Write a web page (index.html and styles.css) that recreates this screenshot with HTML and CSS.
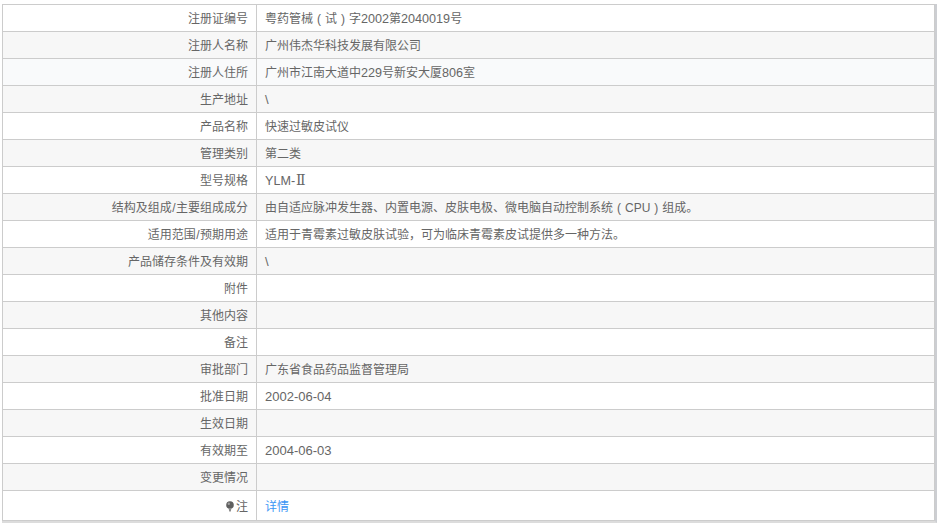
FILE: index.html
```html
<!DOCTYPE html>
<html lang="zh-CN">
<head>
<meta charset="utf-8">
<title>注册证信息</title>
<link rel="stylesheet" href="styles.css">
</head>
<body>
<div class="frame">
<table class="info">
<colgroup><col class="c-label"><col></colgroup>
<tbody>
<tr><th>注册证编号</th><td>粤药管械<span class="paren">(</span>试<span class="paren">)</span>字<span class="lat">2002</span>第<span class="lat">2040019</span>号</td></tr>
<tr><th>注册人名称</th><td>广州伟杰华科技发展有限公司</td></tr>
<tr class="tint"><th>注册人住所</th><td>广州市江南大道中<span class="lat">229</span>号新安大厦<span class="lat">806</span>室</td></tr>
<tr><th>生产地址</th><td><span class="date">\</span></td></tr>
<tr><th>产品名称</th><td>快速过敏皮试仪</td></tr>
<tr><th>管理类别</th><td>第二类</td></tr>
<tr><th>型号规格</th><td><span class="lat">YLM-</span><span class="roman">Ⅱ</span></td></tr>
<tr><th>结构及组成<span class="slash">/</span>主要组成成分</th><td>由自适应脉冲发生器、内置电源、皮肤电极、微电脑自动控制系统<span class="paren">(</span>CPU<span class="paren">)</span>组成。</td></tr>
<tr><th>适用范围<span class="slash">/</span>预期用途</th><td>适用于青霉素过敏皮肤试验，可为临床青霉素皮试提供多一种方法。</td></tr>
<tr><th>产品储存条件及有效期</th><td><span class="date">\</span></td></tr>
<tr><th>附件</th><td></td></tr>
<tr><th>其他内容</th><td></td></tr>
<tr><th>备注</th><td></td></tr>
<tr><th>审批部门</th><td>广东省食品药品监督管理局</td></tr>
<tr><th>批准日期</th><td><span class="date">2002-06-04</span></td></tr>
<tr><th>生效日期</th><td></td></tr>
<tr><th>有效期至</th><td><span class="date">2004-06-03</span></td></tr>
<tr><th>变更情况</th><td></td></tr>
<tr class="last"><th><svg class="bulb" width="8" height="11" viewBox="0 0 8 11" aria-hidden="true"><circle cx="4" cy="4" r="3.8" fill="#5f5f5f"/><circle cx="2.8" cy="2.8" r="1.2" fill="#a0a0a0"/><path d="M2.6 7h2.8l-.6 3.6H3.2z" fill="#8a8a8a"/></svg>注</th><td><a href="#">详情</a></td></tr>
</tbody>
</table>
</div>
</body>
</html>
```
FILE: styles.css
```css
html, body {
  margin: 0;
  padding: 0;
  background: #fff;
}
body {
  padding: 4px 0 0 2px;
  font-family: "Liberation Sans", "Noto Sans CJK SC", sans-serif;
  font-size: 12px;
  color: #666;
}
.frame {
  width: 935px;
  box-sizing: border-box;
  border-right: 2px solid #ccced2;
  border-bottom: 2px solid #dcdcdc;
}
.info {
  width: 933px;
  border-collapse: collapse;
  table-layout: fixed;
}
.c-label {
  width: 254px;
}
.info th, .info td {
  height: 25px;
  padding: 1px 8px 0;
  border: 1px solid #ccc;
  font-weight: normal;
  line-height: 16px;
  box-sizing: content-box;
}
.info th {
  text-align: right;
}
.info td {
  text-align: left;
}
.info tr:nth-child(even) {
  background: #f7f7f7;
}
.info tr.tint {
  background: #f9fafb;
}
.info tr.last th, .info tr.last td {
  height: 26px;
  padding-top: 3px;
}
.lat {
  font-size: 12.6px;
}
.date {
  font-size: 13px;
}
.paren {
  display: inline-block;
  width: 12px;
  text-align: center;
}
.roman {
  font-family: "DejaVu Serif", serif;
  font-size: 14px;
  margin-left: 1px;
}
.slash {
  margin: 0 0.5px;
}
.bulb {
  margin-right: 2px;
  vertical-align: -1px;
}
.info a {
  color: #3a96f5;
  text-decoration: none;
}
```
